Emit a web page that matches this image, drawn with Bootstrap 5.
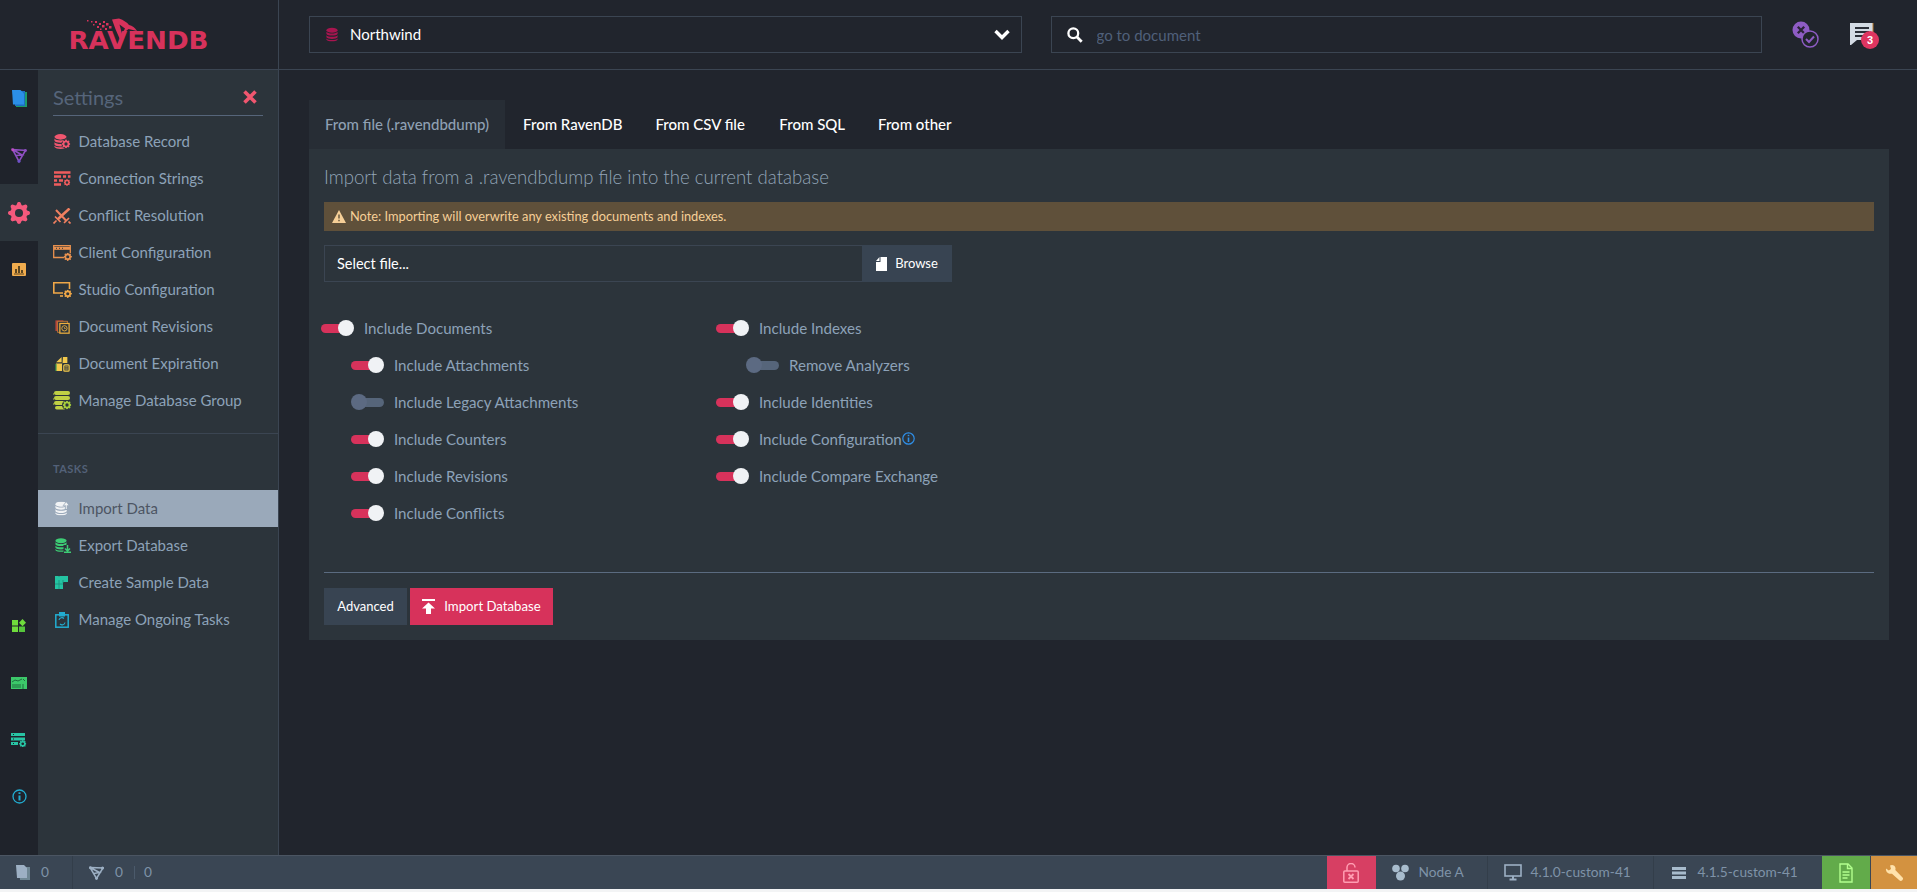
<!DOCTYPE html>
<html lang="en">
<head>
<meta charset="utf-8">
<title>RavenDB Studio</title>
<link href="https://cdn.jsdelivr.net/npm/bootstrap@5.3.0/dist/css/bootstrap.min.css" rel="stylesheet">
<style>
html,body{height:892px;overflow:hidden;background:#f3f4f5}
body{font-family:"Lato","Liberation Sans",sans-serif;font-size:15px;color:#8fa3b8}
.app-shell{height:889px;background:#21252d}
.top-head{height:70px;border-bottom:1px solid #3b4552}
.logo-cell{width:279px;border-right:1px solid #3b4552}
.head-main{padding:0 0 0 30px;gap:29px}
.box-sel{flex:1 1 0;height:37px;border:1px solid #3b4552;padding:0 11px 0 16px;color:#fff}
.box-sel input.form-control{background:transparent;border:0;box-shadow:none;padding:0;font-size:15px;color:#fff;height:30px;border-radius:0}
.box-sel input.form-control::placeholder{color:#50607a}
.lead-ico{margin-right:12px}
.box-find{padding-left:15px}
.box-find .lead-ico{margin-right:14px}
.head-icons{width:126px;padding-left:1px;gap:31px}
.notif-wrap{width:30px;height:30px;padding-top:2px}
.notif-num{top:11.5px;left:11px;width:18px;height:18px;padding:0;line-height:18px;font-size:11px;font-weight:900;background:#de3560;border-radius:50%;font-family:"Liberation Sans",sans-serif}
.rail{width:38px;background:#1f232b}
.rail-item{height:57px;width:38px}
.rail-item.is-on{background:#2c343b}
.rail-low{padding-bottom:30px}
.side-panel{width:241px;background:#2c343b;border-right:1px solid #3b4552}
.side-title{margin:10px 15px 0;height:36px;border-bottom:1px solid #56657a;color:#56657a;font-size:20px;padding-bottom:1px}
.side-close{margin-right:6px}
.side-list{margin-top:7px}
.menu-row.list-group-item{background:transparent;border:0;border-radius:0;height:37px;padding:0 0 0 15px;color:#8da2b8;font-size:15px}
.menu-row.list-group-item.active{background:#9aa9ba;color:#4d5563;margin:0}
.menu-ico{width:26px;flex:none;display:flex;align-items:center;margin-right:-.5px}
.ico-nudge{margin-left:2px}
.side-sep{height:1px;background:#3b4552;margin:14px 0 0}
.side-caption{color:#536178;font-size:11px;font-weight:700;letter-spacing:.45px;padding:27px 0 0 15px;height:56px;line-height:16px}
.content-area{padding:30px 28px 0 30px}
.tab-strip.nav-tabs{border:0;height:49px}
.tab-strip .nav-link{border:0;border-radius:0;background:transparent;color:#fff;font-size:15px;font-weight:500;height:49px;padding:0 16.5px;line-height:49px;margin:0}
.tab-strip .nav-item:nth-child(2) .nav-link{margin-left:1.5px}
.tab-strip .nav-item:nth-child(4) .nav-link{margin-left:1.5px}
.tab-strip .nav-link.active{background:#272d35;color:#8fa0b3;padding:0 16px}
.import-panel{background:#2c343b;padding:15px 15px 15px;height:491px}
.import-title{font-size:18.6px;font-weight:300;color:#93a5b8;line-height:26px;margin:0 0 12px}
.warn-bar.alert{height:29px;margin:0 0 14px;padding:0 8px;background:#5f503a;border:0;border-radius:0;color:#f6cf97;font-size:12.8px}
.file-group{width:628px;height:37px}
.file-group .form-control{background:transparent;border:1px solid #3b4552;border-right:0;border-radius:0;color:#fff;font-size:14.5px;height:37px;padding:0 12px}
.file-group .form-control::placeholder{color:#fff;opacity:1}
.file-group .btn{background:#384452;border:0;border-radius:0;color:#fff;font-size:13px;width:90px;height:37px;padding:0;margin:0!important}
.opt-cols{margin-top:27.5px;height:222.5px}
.opt-col{width:395px;margin-left:-3px}
.opt-col + .opt-col{margin-left:0}
.opt-line{height:37px;color:#8da2b8;font-size:15.1px;gap:10px}
.opt-line.sub{padding-left:30px}
.tgl{width:33px;height:16px;flex:none;position:relative;display:block}
.tgl::before{content:"";position:absolute;left:0;right:2px;top:3.5px;height:9px;background:#d7325b;border-radius:5px}
.tgl::after{content:"";position:absolute;right:0;top:0;width:16px;height:16px;background:#f0f2f5;border-radius:50%}
.tgl.off::before{background:#56657a;left:2px;right:0}
.tgl.off::after{right:auto;left:0;background:#5c6a82}
.foot-rule{margin:40px 0 15px;border:0;border-top:1px solid #5b6b80;opacity:1;height:0}
.act-btn.btn{height:37px;border:0;border-radius:0;color:#fff;font-size:13px;padding:0;margin:0}
.act-plain{background:#384452;width:83px}
.act-main.btn{background:#d7325b;width:143px;margin-left:3px;gap:9px;font-size:13.2px}
.status-bar{height:34px;background:#3a4654;border-top:1px solid #4b5562;color:#7f93a8;font-size:13.7px}
.st-cell{height:100%}
.st-docs{width:73px;border-right:1px solid #333e4a;padding-left:16px;gap:11px}
.st-idx{padding-left:16px;gap:11px}
.st-last{margin-left:-2px}
.st-div{width:1px;height:13px;background:#4b5a6b}
.st-red{width:48.5px;background:#d73f63;justify-content:center}
.st-node{width:112px;padding-left:16px;gap:10px;border-right:1px solid #333e4a}
.st-ver{width:166px;padding-left:16px;gap:9px;border-right:1px solid #333e4a}
.st-ver2{width:168.5px;padding-left:18px;gap:12px}
.st-green{width:48px;background:#62ab4a;justify-content:center;margin-right:1px}
.st-orange{width:46px;background:#d39240;justify-content:center}
.c-red{color:#f0566f}.c-red2{color:#ee5c5e}.c-cor{color:#f07f60}.c-ora{color:#e8914f}.c-amb{color:#efa748}.c-yel{color:#f2c94c}.c-lim{color:#bfd044}.c-wht{color:#f1f3f5}.c-grn{color:#3dcc75}.c-tea{color:#24c4a2}.c-blu{color:#22acd0}.c-db{color:#a8154f}.c-gear{color:#f4597c}.c-tgear{color:#28c4a4}.c-lgear{color:#a6cd3c}
svg{display:block}
</style>
</head>
<body>
<svg width="0" height="0" class="position-absolute">
<defs>
<symbol id="gear" viewBox="0 0 16 16"><path fill="currentColor" fill-rule="evenodd" d="M9.405 1.05c-.413-1.4-2.397-1.4-2.81 0l-.1.34a1.464 1.464 0 0 1-2.105.872l-.31-.17c-1.283-.698-2.686.705-1.987 1.987l.169.311c.446.82.023 1.841-.872 2.105l-.34.1c-1.4.413-1.4 2.397 0 2.81l.34.1a1.464 1.464 0 0 1 .872 2.105l-.17.31c-.698 1.283.705 2.686 1.987 1.987l.311-.169a1.464 1.464 0 0 1 2.105.872l.1.34c.413 1.4 2.397 1.4 2.81 0l.1-.34a1.464 1.464 0 0 1 2.105-.872l.31.17c1.283.698 2.686-.705 1.987-1.987l-.169-.311a1.464 1.464 0 0 1 .872-2.105l.34-.1c1.4-.413 1.4-2.397 0-2.81l-.34-.1a1.464 1.464 0 0 1-.872-2.105l.17-.31c.698-1.283-.705-2.686-1.987-1.987l-.311.169a1.464 1.464 0 0 1-2.105-.872l-.1-.34zM8 10.93a2.929 2.929 0 1 1 0-5.858 2.929 2.929 0 0 1 0 5.858z"/></symbol>
<symbol id="dbs" viewBox="0 0 14 16"><g fill="currentColor"><ellipse cx="7" cy="3" rx="6.500" ry="3"/><path d="M.5 4.800C1.500 6.300 4 6.800 7 6.800s5.500-.5 6.500-2V7.300C12.500 8.800 10 9.300 7 9.300S1.500 8.800.5 7.300z"/><path d="M.5 8.800C1.500 10.200 4 10.700 7 10.700s5.500-.5 6.500-1.900V11.300C12.500 12.800 10 13.300 7 13.300S1.500 12.800.5 11.300z"/><path d="M.5 12.600C1.500 13.900 4 14.300 7 14.300s5.500-.4 6.500-1.700V14c-1 1.400-3.500 2-6.500 2S1.500 15.400.5 14z"/></g></symbol>
</defs>
</svg>
<div class="app-shell d-flex flex-column">
  <header class="top-head d-flex flex-shrink-0">
    <div class="logo-cell d-flex align-items-center justify-content-center">
      <svg width="160" height="50" viewBox="0 0 160 50" fill="#d7325b" aria-label="RavenDB logo">
        <path d="M53 9.500 60 8.500Q67 11 70 15 75 16 78 21L69.500 19 66.500 21.500 61 29.500Q56 19 53 9.500Z"/>
        <path d="M60.500 14.500 63 24 66 18.500Z" fill="#21252d"/>
        <g><rect x="28" y="10" width="1.500" height="1.500"/><rect x="32" y="11" width="1.500" height="1.500"/><rect x="36" y="11" width="2" height="2"/><rect x="34" y="14" width="1.500" height="1.500"/><rect x="40" y="13" width="2" height="2"/><rect x="38" y="16" width="2" height="2"/><rect x="44" y="11" width="2" height="2"/><rect x="43" y="15" width="2.500" height="2.500"/><rect x="47" y="13" width="2.500" height="2.500"/><rect x="46" y="18" width="2" height="2"/><rect x="50" y="16" width="2.500" height="2.500"/><rect x="41" y="18.500" width="1.500" height="1.500"/></g>
        <text x="9.500" y="39" font-family="'DejaVu Sans','Liberation Sans',sans-serif" font-weight="700" font-size="24" textLength="140" lengthAdjust="spacingAndGlyphs">RAVENDB</text>
      </svg>
    </div>
    <div class="head-main flex-grow-1 d-flex align-items-center">
      <div class="box-sel d-flex align-items-center">
        <svg class="lead-ico c-db flex-shrink-0" width="12" height="15"><use href="#dbs"/></svg>
        <span class="flex-grow-1">Northwind</span>
        <svg width="16" height="11" viewBox="0 0 16 11" fill="none" stroke="#fff" stroke-width="3.400"><path d="M1.500 2 8 8.500 14.500 2"/></svg>
      </div>
      <div class="box-sel box-find d-flex align-items-center">
        <svg class="lead-ico flex-shrink-0" width="16" height="16" viewBox="0 0 16 16" fill="none" stroke="#fff"><circle cx="6.300" cy="6.300" r="4.900" stroke-width="2.300"/><path d="M10 10l4.700 4.700" stroke-width="2.800"/></svg>
        <input class="form-control" type="text" placeholder="go to document" aria-label="go to document">
      </div>
      <div class="head-icons d-flex align-items-center flex-shrink-0">
        <svg width="27" height="27" viewBox="0 0 27 27"><circle cx="9" cy="9" r="8.500" fill="#8e5cc4"/><path d="M5.800 5.800l6.400 6.400M12.200 5.800l-6.400 6.400" stroke="#2b2438" stroke-width="2.300"/><circle cx="18" cy="18" r="8" fill="#21252d" stroke="#8e5cc4" stroke-width="1.500"/><path d="M14 18l3 3 5-5.500" fill="none" stroke="#8e5cc4" stroke-width="2"/></svg>
        <div class="notif-wrap position-relative">
          <svg width="24" height="24" viewBox="0 0 24 24"><path d="M0 1h23v17H7l-6 5H0z" fill="#d3dbe4"/><path d="M23 1v10" stroke="#b97a2f" stroke-width="1"/><path d="M5 6h14M5 10h14M5 14h8" stroke="#2a2f38" stroke-width="2"/></svg>
          <span class="badge notif-num position-absolute">3</span>
        </div>
      </div>
    </div>
  </header>

  <div class="d-flex flex-grow-1 overflow-hidden">
    <nav class="rail d-flex flex-column justify-content-between flex-shrink-0">
      <div>
        <div class="rail-item d-flex align-items-center justify-content-center"><svg width="15" height="17" viewBox="0 0 15 17"><path d="M3 2h12v15H4z" fill="#1d9a6a"/><path d="M2 1h11v15H3z" fill="#1c6fc0"/><path d="M0 0h8.500L12 3.500V14.500H1z" fill="#2b8fe8"/></svg></div>
        <div class="rail-item d-flex align-items-center justify-content-center"><svg width="16" height="15" viewBox="0 0 16 15" fill="none" stroke="#8e4fc2" stroke-width="1.600"><path d="M1.500 1.500 14.500 2.500 8 13.500zM1.500 1.500 11 7 5 7.500"/><circle cx="1.800" cy="1.800" r="1.500" fill="#c04fc2" stroke="none"/><circle cx="14.300" cy="2.500" r="1.500" fill="#8e4fc2" stroke="none"/><circle cx="8" cy="13.300" r="1.500" fill="#6d52c8" stroke="none"/></svg></div>
        <div class="rail-item is-on d-flex align-items-center justify-content-center"><svg class="c-gear" width="22" height="22"><use href="#gear"/></svg></div>
        <div class="rail-item d-flex align-items-center justify-content-center"><svg width="14" height="13" viewBox="0 0 14 13"><rect width="14" height="13" rx="1" fill="#f0ac4e"/><path d="M2 11h10" stroke="#5e4720" stroke-width="1"/><path d="M4 6v4M7 3v7M10 7v3" stroke="#5e4720" stroke-width="2"/></svg></div>
      </div>
      <div class="rail-low">
        <div class="rail-item d-flex align-items-center justify-content-center"><svg width="14" height="13" viewBox="0 0 14 13" fill="#6fdc3c"><rect y="1" width="6" height="5.500"/><rect y="7.500" width="6" height="5.500"/><rect x="7" y="7.500" width="6" height="5.500" fill="#56c63c"/><path d="M10.500 0 14 3.700 10.500 7.200 7 3.700z"/></svg></div>
        <div class="rail-item d-flex align-items-center justify-content-center"><svg width="16" height="12" viewBox="0 0 16 12"><rect width="16" height="12" fill="#3cc86a"/><path d="M1 5 4 3l3 1 4-2M1 8h9M1 10h9M12 7v5M12 2l2 2" stroke="#1f6e3e" fill="none" stroke-width="1"/></svg></div>
        <div class="rail-item d-flex align-items-center justify-content-center"><svg width="16" height="14" viewBox="0 0 16 14"><path d="M0 0h14v3H0zM0 4.500h14v3H0zM0 9h7v3H0z" fill="#28c4a4"/><path d="M2 1.500h1M2 6h1M2 10.500h1" stroke="#1f232b"/><svg class="c-tgear" x="8" y="7" width="7.500" height="7.500"><use href="#gear"/></svg></svg></div>
        <div class="rail-item d-flex align-items-center justify-content-center"><svg width="15" height="15" viewBox="0 0 15 15" fill="none" stroke="#22acd0"><circle cx="7.500" cy="7.500" r="6.500" stroke-width="1.300"/><path d="M7.500 6.500v5" stroke-width="2"/><path d="M7.500 3.300v1.700" stroke-width="2"/></svg></div>
      </div>
    </nav>

    <aside class="side-panel flex-shrink-0 d-flex flex-column">
      <div class="side-title d-flex align-items-center justify-content-between">
        <span>Settings</span>
        <svg class="side-close" width="14" height="14" viewBox="0 0 14 14" stroke="#f0566f" stroke-width="3.600"><path d="M1.500 1.500l11 11M12.500 1.500l-11 11"/></svg>
      </div>
      <div class="list-group side-list">
        <a class="list-group-item menu-row d-flex align-items-center" href="#"><span class="menu-ico c-red"><svg width="18" height="15" viewBox="0 0 18 15"><svg width="13" height="15" x="1"><use href="#dbs"/></svg><circle cx="13" cy="10" r="4.500" fill="#2c343b"/><svg x="8.500" y="5.500" width="9" height="9"><use href="#gear"/></svg></svg></span>Database Record</a>
        <a class="list-group-item menu-row d-flex align-items-center" href="#"><span class="menu-ico c-red2"><svg width="18" height="15" viewBox="0 0 18 15" stroke="currentColor" stroke-width="2.400"><path d="M1 1.500h16.500M1 5.500h7M10 5.500h3M15 5.500h2.500M1 9.500h3M6 9.500h4M1 13.500h7"/><svg x="10.500" y="8" width="7" height="7" stroke="none"><use href="#gear"/></svg></svg></span>Connection Strings</a>
        <a class="list-group-item menu-row d-flex align-items-center" href="#"><span class="menu-ico c-cor"><svg width="18" height="16" viewBox="0 0 18 16" fill="none" stroke="currentColor"><path d="M3 2l10 10.500" stroke-width="2"/><path d="M11 15l5-5M15.500 13.500l2 2" stroke-width="1.700"/><path d="M16.500 .5 4.500 11.500" stroke-width="2.600"/><path d="M2 8.500l5.500 5.500M3.500 12.500l-3 3" stroke-width="1.700"/></svg></span>Conflict Resolution</a>
        <a class="list-group-item menu-row d-flex align-items-center" href="#"><span class="menu-ico c-ora"><svg width="19" height="16" viewBox="0 0 19 16" fill="none" stroke="currentColor"><path d="M11 12.500H.7V.7h16.600V8" stroke-width="1.300"/><path d="M1 3.300h16" stroke-width="3" /><path d="M3 3.300h1M6 3.300h1M9 3.300h1" stroke="#2c343b"/><svg x="10.500" y="7.500" width="8.500" height="8.500" stroke="none"><use href="#gear"/></svg></svg></span>Client Configuration</a>
        <a class="list-group-item menu-row d-flex align-items-center" href="#"><span class="menu-ico c-amb"><svg width="19" height="16" viewBox="0 0 19 16" fill="none" stroke="currentColor"><path d="M10 11H.8V.8h15.700V7" stroke-width="1.600"/><path d="M7 14h3" stroke-width="1.600"/><svg x="10.500" y="7.500" width="8.500" height="8.500" stroke="none"><use href="#gear"/></svg></svg></span>Studio Configuration</a>
        <a class="list-group-item menu-row d-flex align-items-center" href="#"><span class="menu-ico c-amb"><svg class="ico-nudge" width="15" height="16" viewBox="0 0 17 16" fill="none"><rect x=".5" y=".5" width="9" height="12" fill="#b8483a"/><rect x="3" y="1.500" width="11" height="12.500" fill="#2c343b" stroke="#c87a35"/><rect x="5.500" y="4" width="10.500" height="11" fill="#2c343b" stroke="#efb03e" stroke-width="1.400"/><circle cx="10.700" cy="9.500" r="3" stroke="#efb03e"/><path d="M10.700 8v1.700h1.500" stroke="#efb03e" stroke-width=".8"/></svg></span>Document Revisions</a>
        <a class="list-group-item menu-row d-flex align-items-center" href="#"><span class="menu-ico c-yel"><svg class="ico-nudge" width="15" height="16" viewBox="0 0 17 16"><path d="M7.500 0v6H1.300zM9 0h5v7H9a1 1 0 0 0-1 1v8H1V7.500h7.500z" fill="#f2c94c"/><path d="M1 16V8" stroke="#2b8a4a" stroke-width="1.400"/><rect x="10" y="9" width="6" height="7" rx="1" fill="none" stroke="#f2c94c" stroke-width="1.400"/><path d="M11.500 11.300h3M11.500 13.700h3" stroke="#f2c94c"/></svg></span>Document Expiration</a>
        <a class="list-group-item menu-row d-flex align-items-center" href="#"><span class="menu-ico c-lim"><svg width="19" height="19" viewBox="0 0 19 19" fill="currentColor"><rect x="1" y="0" width="16" height="4" rx="2"/><rect x="1" y="5" width="16" height="4" rx="2"/><rect x="1" y="10" width="14" height="4" rx="2"/><rect x="2" y="15" width="11" height="3.500" rx="1.700"/><path d="M0 3h1M0 8h1M0 13h1" stroke="currentColor"/><circle cx="14" cy="14" r="5" fill="#2c343b"/><svg class="c-lgear" x="9.500" y="9.500" width="9" height="9"><use href="#gear"/></svg></svg></span>Manage Database Group</a>
      </div>
      <div class="side-sep"></div>
      <div class="side-caption">TASKS</div>
      <div class="list-group">
        <a class="list-group-item menu-row active d-flex align-items-center" href="#"><span class="menu-ico c-wht"><svg class="ico-nudge" width="15" height="15" viewBox="0 0 16 15"><svg width="13" height="15"><use href="#dbs"/></svg><path d="M12 0 8 4.500h2.500V9h3V4.500H16z" fill="#9aa9ba"/><path d="M12 .8 9.500 4H11.500v4h1V4h2z" fill="currentColor"/></svg></span>Import Data</a>
        <a class="list-group-item menu-row d-flex align-items-center" href="#"><span class="menu-ico c-grn"><svg class="ico-nudge" width="16" height="15" viewBox="0 0 16 15"><svg width="12" height="14"><use href="#dbs"/></svg><path d="M8.500 7h7.500v8H8.500z" fill="#2c343b"/><path d="M9 14.300h7M12.500 7v6M10 10.500l2.500 2.500 2.500-2.500" fill="none" stroke="currentColor" stroke-width="1.500"/></svg></span>Export Database</a>
        <a class="list-group-item menu-row d-flex align-items-center" href="#"><span class="menu-ico c-tea"><svg class="ico-nudge" width="13" height="13" viewBox="0 0 13 13"><path d="M0 0h13v6H8v7H0z" fill="currentColor"/><path d="M4 4v9M8 4v3M0 8h8M4 0v1" stroke="#1f8a7a" stroke-width=".8"/></svg></span>Create Sample Data</a>
        <a class="list-group-item menu-row d-flex align-items-center" href="#"><span class="menu-ico c-blu"><svg class="ico-nudge" width="14" height="16" viewBox="0 0 14 16" fill="none" stroke="currentColor"><rect x=".8" y="2.800" width="12.400" height="12.400" stroke-width="1.500"/><rect x="4.500" y=".5" width="5" height="3.500" fill="currentColor"/><path d="M4 8a3 3 0 0 1 5-1.500M10 10.500a3 3 0 0 1-5 1.500" stroke-width="1.100"/></svg></span>Manage Ongoing Tasks</a>
      </div>
    </aside>

    <main class="content-area flex-grow-1">
      <ul class="nav nav-tabs tab-strip">
        <li class="nav-item"><a class="nav-link active" href="#">From file (.ravendbdump)</a></li>
        <li class="nav-item"><a class="nav-link" href="#">From RavenDB</a></li>
        <li class="nav-item"><a class="nav-link" href="#">From CSV file</a></li>
        <li class="nav-item"><a class="nav-link" href="#">From SQL</a></li>
        <li class="nav-item"><a class="nav-link" href="#">From other</a></li>
      </ul>
      <section class="import-panel">
        <h3 class="import-title">Import data from a .ravendbdump file into the current database</h3>
        <div class="alert warn-bar d-flex align-items-center gap-1">
          <svg width="14" height="13" viewBox="0 0 14 13"><path d="M7 0 14 13H0z" fill="#f6cf97"/><path d="M7 4.500v4M7 9.800v1.500" stroke="#5f503a" stroke-width="1.400"/></svg>
          <span>Note: Importing will overwrite any existing documents and indexes.</span>
        </div>
        <div class="input-group file-group">
          <input class="form-control" type="text" placeholder="Select file..." aria-label="Select file">
          <button class="btn d-flex align-items-center justify-content-center gap-2" type="button"><svg width="11" height="14" viewBox="0 0 11 14"><path d="M4.500 0H11v14H0V5h4.500zM3.500 0v4H0z" fill="#fff"/></svg>Browse</button>
        </div>
        <div class="opt-cols d-flex">
          <div class="opt-col">
            <label class="opt-line d-flex align-items-center"><span class="tgl"></span>Include Documents</label>
            <label class="opt-line sub d-flex align-items-center"><span class="tgl"></span>Include Attachments</label>
            <label class="opt-line sub d-flex align-items-center"><span class="tgl off"></span>Include Legacy Attachments</label>
            <label class="opt-line sub d-flex align-items-center"><span class="tgl"></span>Include Counters</label>
            <label class="opt-line sub d-flex align-items-center"><span class="tgl"></span>Include Revisions</label>
            <label class="opt-line sub d-flex align-items-center"><span class="tgl"></span>Include Conflicts</label>
          </div>
          <div class="opt-col">
            <label class="opt-line d-flex align-items-center"><span class="tgl"></span>Include Indexes</label>
            <label class="opt-line sub d-flex align-items-center"><span class="tgl off"></span>Remove Analyzers</label>
            <label class="opt-line d-flex align-items-center"><span class="tgl"></span>Include Identities</label>
            <label class="opt-line d-flex align-items-center"><span class="tgl"></span><span class="d-flex align-items-center">Include Configuration<svg width="13" height="13" viewBox="0 0 13 13" fill="none" stroke="#2f8fe8"><circle cx="6.500" cy="6.500" r="5.700" stroke-width="1.200"/><path d="M6.500 5.500v4.500" stroke-width="1.600"/><path d="M6.500 2.800v1.400" stroke-width="1.600"/></svg></span></label>
            <label class="opt-line d-flex align-items-center"><span class="tgl"></span>Include Compare Exchange</label>
          </div>
        </div>
        <hr class="foot-rule">
        <div class="d-flex">
          <button class="btn act-btn act-plain" type="button">Advanced</button>
          <button class="btn act-btn act-main d-flex align-items-center justify-content-center" type="button"><svg width="13" height="15" viewBox="0 0 13 15" fill="#fff"><rect width="13" height="2"/><path d="M6.500 3.500 13 9.500H9V15H4V9.500H0z"/></svg>Import Database</button>
        </div>
      </section>
    </main>
  </div>

  <footer class="status-bar d-flex justify-content-between flex-shrink-0">
    <div class="d-flex align-items-center">
      <div class="st-cell st-docs d-flex align-items-center"><svg width="14" height="15" viewBox="0 0 14 15"><path d="M3 2h11v13H4z" fill="#6f8794"/><path d="M0 0h8l3 3v10H1z" fill="#9db0c4"/></svg><span>0</span></div>
      <div class="st-cell st-idx d-flex align-items-center"><svg width="15" height="14" viewBox="0 0 15 14" fill="none" stroke="#9db0c4" stroke-width="1.500"><path d="M1 1.500 14 2 7.500 12.500zM1 1.500 10.500 6.500 5 7.500"/><circle cx="1.500" cy="1.700" r="1.500" fill="#9db0c4" stroke="none"/><circle cx="13.500" cy="2" r="1.500" fill="#9db0c4" stroke="none"/><circle cx="7.500" cy="12.300" r="1.500" fill="#9db0c4" stroke="none"/></svg><span>0</span><span class="st-div"></span><span class="st-last">0</span></div>
    </div>
    <div class="d-flex align-items-center">
      <div class="st-cell st-red d-flex align-items-center"><svg width="16" height="20" viewBox="0 0 16 20" fill="none" stroke="#ff9db2" stroke-width="1.500"><path d="M4 8V4.500a4 4 0 0 1 8 0"/><rect x=".8" y="8" width="14.400" height="11.200" rx="1"/><path d="M5.500 11l5 5M10.500 11l-5 5" stroke-width="1.800"/></svg></div>
      <div class="st-cell st-node d-flex align-items-center"><svg width="17" height="17" viewBox="0 0 17 17" fill="#a8bccd"><circle cx="4" cy="4.500" r="3.800"/><circle cx="13" cy="4.500" r="3.800"/><circle cx="8.500" cy="12" r="4.500"/></svg>Node A</div>
      <div class="st-cell st-ver d-flex align-items-center"><svg width="18" height="17" viewBox="0 0 18 17" fill="none" stroke="#9db0c4"><rect x="1" y="1" width="16" height="11" stroke-width="1.600"/><path d="M9 12v3M5.500 15.500h7" stroke-width="2"/></svg>4.1.0-custom-41</div>
      <div class="st-cell st-ver2 d-flex align-items-center"><svg width="14" height="12" viewBox="0 0 14 12" fill="#a8bccd"><rect width="14" height="3"/><rect y="4.500" width="14" height="3"/><rect y="9" width="14" height="3"/></svg>4.1.5-custom-41</div>
      <div class="st-cell st-green d-flex align-items-center"><svg width="14" height="20" viewBox="0 0 14 20" fill="none" stroke="#b2ff8e" stroke-width="1.400"><path d="M1 1h8l4 4v14H1z"/><path d="M8.500 1v4.500H13M3.500 9h7M3.500 12h7M3.500 15h5"/></svg></div>
      <div class="st-cell st-orange d-flex align-items-center"><svg width="18" height="18" viewBox="0 0 18 18" fill="#ffe2ab"><path d="M1 4.500 3.800 6.500 6 5 5 1.500C7.500.2 10 1.500 10.500 4c.1.700 0 1.300-.2 2l7 7.200a1.900 1.900 0 0 1-3 3L7 9.700C3.500 10.500.5 8 1 4.500z"/></svg></div>
    </div>
  </footer>
</div>
</body>
</html>
